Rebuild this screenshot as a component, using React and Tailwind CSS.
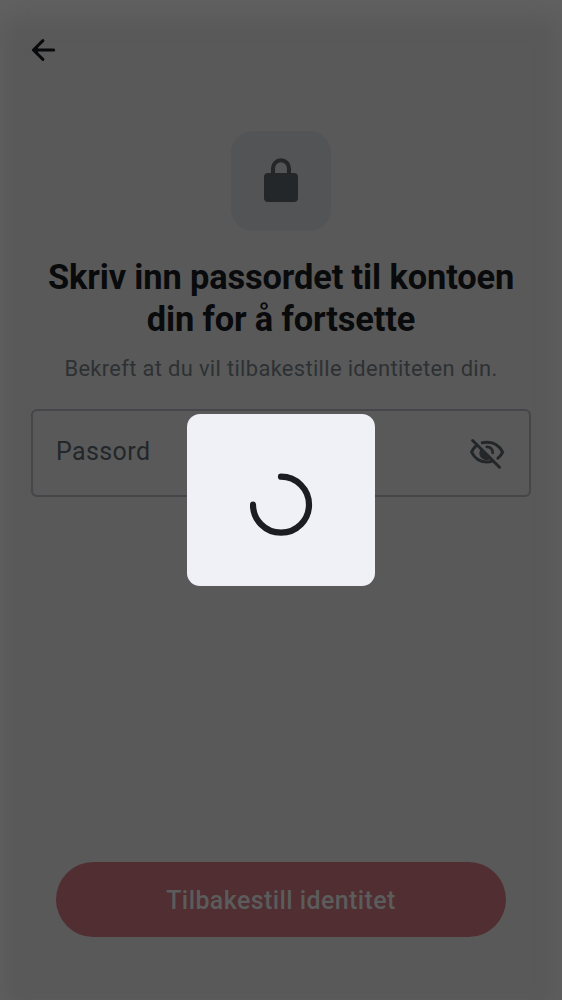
function BackIcon() {
  return (
    <svg className="h-[38px] w-[38px]" viewBox="25.300 31 38 38" fill="none" stroke="#090a0c" strokeWidth="3" strokeLinecap="round" strokeLinejoin="round">
      <path d="M43.2 40.6 33.700 50l9.500 9.400M33.700 50H54" />
      <path d="M37.600 47.200 34.600 50l3 2.800z" fill="#090a0c" strokeWidth="1" />
    </svg>
  );
}

function LockIcon() {
  return (
    <svg className="h-[50px] w-[50px]" viewBox="256 156 50 50" fill="none">
      <path d="M273 175v-6.700a8 8 0 0 1 16 0V175" stroke="#23272a" strokeWidth="4.100" />
      <rect x="264" y="173" width="34" height="29" rx="4" fill="#23272a" />
    </svg>
  );
}

function EyeOffIcon() {
  return (
    <svg className="h-[38px] w-[38px]" viewBox="468 434.500 38 38" fill="none" stroke="#23272a" strokeWidth="3" strokeLinecap="round">
      <path d="M472.600 441 499.500 467.700" />
      <path d="M475.800 446.600Q473 449 471.600 452.600Q476.500 462.600 487.200 462.600Q490 462.600 492.300 461.700" />
      <path d="M482.300 443.200Q484.500 442.700 487.200 442.700Q497.800 442.700 502.600 452.600Q501 456.200 497.900 458.700" />
      <path d="M486.800 447.300a5.600 5.600 0 0 1 5.900 6.100" strokeWidth="2.700" />
      <path d="M481.400 448.400a7.200 7.200 0 0 0 10.200 10.200z" fill="#23272a" stroke="none" />
    </svg>
  );
}

function Spinner() {
  return (
    <svg className="h-[63px] w-[63px]" viewBox="250 472.800 63 63" fill="none" stroke="#1b1d22" strokeWidth="6.200" strokeLinecap="round">
      <path d="M281 476.500A28 28 0 1 1 253 504.500" />
    </svg>
  );
}

function LoadingDialog() {
  return (
    <div className="absolute inset-0 flex items-center justify-center">
      <div className="flex h-[172px] w-[188px] items-center justify-center rounded-[13px] bg-[#f0f1f6] pt-[9px]">
        <Spinner />
      </div>
    </div>
  );
}

export default function App() {
  return (
    <div className="relative h-[1000px] w-[562px] overflow-hidden bg-[#595959] font-['Roboto',sans-serif] shadow-[inset_0_14px_24px_2px_#616161]">
      <div className="flex h-full flex-col">
        <header className="flex h-[100px] items-center pl-[25px]">
          <button aria-label="Tilbake"><BackIcon /></button>
        </header>
        <main className="flex flex-1 flex-col items-center px-[31px] pt-[31px]">
          <div className="flex h-[100px] w-[100px] items-center justify-center rounded-[22px] bg-[#535456]">
            <LockIcon />
          </div>
          <h1 className="mt-[25px] text-center text-[34.400px] leading-[42.200px] font-bold tracking-[-0.130px] whitespace-nowrap text-[#090a0c]">
            Skriv inn passordet til kontoen<br />din for å fortsette
          </h1>
          <p className="mt-[12.600px] text-[21.900px] leading-[31px] tracking-[0.340px] whitespace-nowrap text-[#2d3134]">
            Bekreft at du vil tilbakestille identiteten din.
          </p>
          <div className="mt-[25px] flex h-[88px] w-[500px] items-center justify-between rounded-[6px] border-2 border-[#45454a] pr-[23px] pl-[23px]">
            <span className="pb-[3px] text-[25px] tracking-[0.390px] text-[#23272a]">Passord</span>
            <button aria-label="Vis passord"><EyeOffIcon /></button>
          </div>
        </main>
        <footer className="px-14 pb-[62.600px]">
          <button className="flex h-[75px] w-full items-center justify-center rounded-full bg-[#512e32] pt-[2px] text-[25px] font-medium tracking-[0.400px] text-[#5b5c5c]">
            Tilbakestill identitet
          </button>
        </footer>
      </div>
      <LoadingDialog />
    </div>
  );
}
